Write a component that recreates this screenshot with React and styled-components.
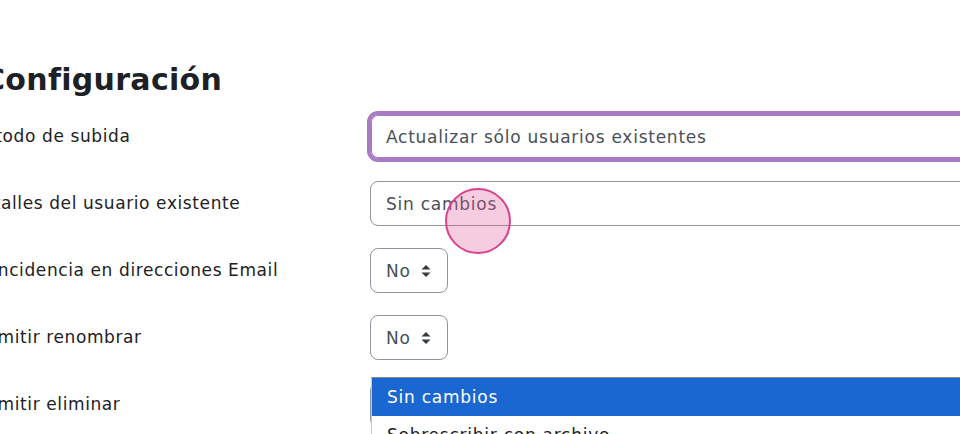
import React from "react";
import styled, { createGlobalStyle } from "styled-components";

const Global = createGlobalStyle`
  html, body { margin: 0; padding: 0; background: #fff; overflow: hidden; }
  body { font-family: "DejaVu Sans", "Noto Sans", sans-serif; color: #1d2125; }
`;

const Viewport = styled.div`
  width: 960px;
  height: 434px;
  overflow: hidden;
  position: relative;
`;

const Page = styled.div`
  margin-left: -31px;
  padding-top: 58px;
  width: 1400px;
  position: relative;
`;

const Heading = styled.h3`
  margin: 0 0 12px 14px;
  font-size: 30px;
  font-weight: 700;
  line-height: 44px;
  color: #1d2125;
  letter-spacing: 0.3px;
`;

const Form = styled.div`
  display: grid;
  grid-template-columns: 401px 1fr;
  row-gap: 22px;
  align-items: center;
`;

const Label = styled.div`
  font-size: 17px;
  letter-spacing: 0.6px;
  line-height: 45px;
  color: #1d2125;
  white-space: nowrap;
`;

const Select = styled.div`
  box-sizing: border-box;
  height: 45px;
  width: ${(p) => (p.$narrow ? "78px" : "700px")};
  border: 1px solid ${(p) => (p.$focus ? "#a97bc4" : "#8f959e")};
  border-radius: 8px;
  display: flex;
  align-items: center;
  padding: 0 15px;
  gap: 10px;
  font-size: 17px;
  letter-spacing: 0.75px;
  color: #495057;
  background: #fff;
  white-space: nowrap;
  box-shadow: ${(p) =>
    p.$focus ? "0 0 0 3px #a97bc4, inset 0 0 0 1px #a97bc4" : "none"};
`;

const Cell = styled.div`
  position: relative;
`;

const Dropdown = styled.div`
  position: absolute;
  left: 1px;
  top: -5px;
  width: 700px;
  border-top: 1px solid #8c8c8c;
  border-left: 1px solid #c8c8c8;
  background: #fff;
  z-index: 2;
`;

const Option = styled.div`
  height: 38px;
  display: flex;
  align-items: center;
  padding: 0 15px;
  font-size: 17px;
  letter-spacing: 0.75px;
  white-space: nowrap;
  background: ${(p) => (p.$active ? "#1a67d2" : "#fff")};
  color: ${(p) => (p.$active ? "#fff" : "#1d2125")};
`;

const Ripple = styled.div`
  position: absolute;
  left: 445px;
  top: 188px;
  width: 62px;
  height: 62px;
  border-radius: 50%;
  border: 2px solid #d9418c;
  background: rgba(226, 90, 152, 0.3);
  z-index: 3;
`;

const Arrows = () => (
  <svg width="10" height="14" viewBox="0 0 10 14">
    <path d="M5 1 L9.5 5.5 H0.5 Z" fill="#343a40" />
    <path d="M5 13 L9.5 8.5 H0.5 Z" fill="#343a40" />
  </svg>
);

export default function App() {
  return (
    <Viewport>
      <Global />
      <Page>
        <Heading>Configuración</Heading>
        <Form>
          <Label>Método de subida</Label>
          <Cell>
            <Select $focus>Actualizar sólo usuarios existentes</Select>
          </Cell>
          <Label>Detalles del usuario existente</Label>
          <Cell>
            <Select>Sin cambios</Select>
          </Cell>
          <Label>Coincidencia en direcciones Email</Label>
          <Cell>
            <Select $narrow>
              No <Arrows />
            </Select>
          </Cell>
          <Label>Permitir renombrar</Label>
          <Cell>
            <Select $narrow>
              No <Arrows />
            </Select>
          </Cell>
          <Label>Permitir eliminar</Label>
          <Cell>
            <Select $narrow>
              No <Arrows />
            </Select>
            <Dropdown>
              <Option $active>Sin cambios</Option>
              <Option>Sobrescribir con archivo</Option>
              <Option>Sobrescribir con archivo y valores por defecto</Option>
            </Dropdown>
          </Cell>
        </Form>
      </Page>
      <Ripple />
    </Viewport>
  );
}
